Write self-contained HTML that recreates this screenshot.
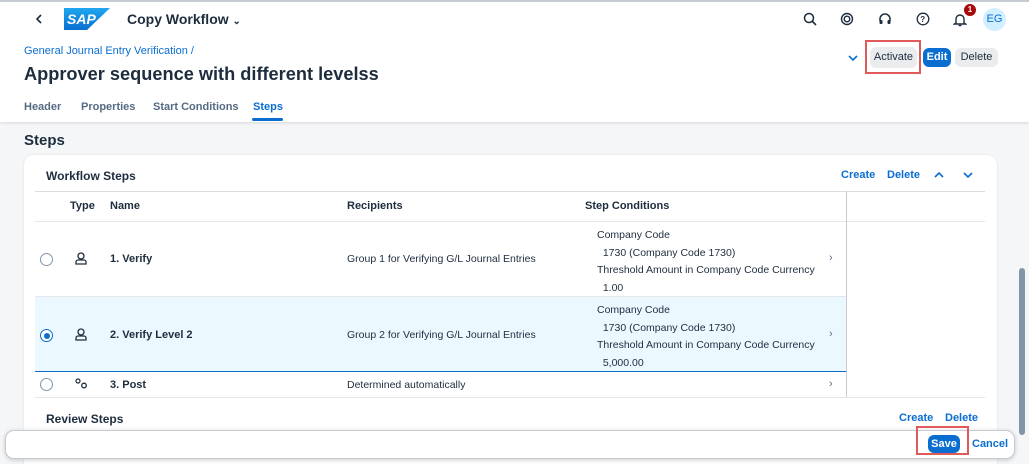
<!DOCTYPE html>
<html><head><meta charset="utf-8"><style>
*{box-sizing:border-box;margin:0;padding:0}
html,body{width:1029px;height:464px;overflow:hidden}
body{background:#f5f6f7;font-family:"Liberation Sans",sans-serif;color:#1d2d3e;position:relative}
.a{position:absolute;white-space:nowrap}
.b{font-weight:bold}
.blue{color:#0a6ed1}
.t12{font-size:11px}
</style></head><body>
<div class="a" style="left:0;top:0;width:1029px;height:122px;background:#fff;box-shadow:0 1px 3px rgba(0,0,0,.12)"></div>
<div class="a" style="left:0;top:0;width:1029px;height:2px;background:#c6ccd2"></div>
<svg class="a" style="left:34px;top:13px" width="10" height="12"><path d="M7 2L3 6l4 4" stroke="#1d2d3e" stroke-width="1.6" fill="none"/></svg>
<svg class="a" style="left:64px;top:8px" width="46" height="22"><defs><linearGradient id="g" x1="0" y1="0" x2="0" y2="1"><stop offset="0" stop-color="#1fa7ef"/><stop offset="1" stop-color="#0a6ed1"/></linearGradient></defs><path d="M0 0H46L23 22H0Z" fill="url(#g)"/><text x="3" y="16" font-family="Liberation Sans" font-weight="bold" font-size="14" fill="#fff" font-style="italic">SAP</text></svg>
<div class="a b" style="left:127px;top:11px;font-size:14px">Copy Workflow <span style="font-size:10px">⌄</span></div>
<svg class="a" style="left:803px;top:12px" width="14" height="14"><circle cx="6" cy="6" r="4.5" stroke="#1d2d3e" stroke-width="1.5" fill="none"/><path d="M9.5 9.5L13 13" stroke="#1d2d3e" stroke-width="1.6"/></svg>
<svg class="a" style="left:840px;top:12px" width="14" height="14"><circle cx="7" cy="7" r="5.5" stroke="#1d2d3e" stroke-width="1.4" fill="none"/><circle cx="7" cy="7" r="2.8" stroke="#1d2d3e" stroke-width="1.4" fill="none"/></svg>
<svg class="a" style="left:878px;top:12px" width="14" height="14"><path d="M2 9V7a5 5 0 0110 0v2" stroke="#1d2d3e" stroke-width="1.5" fill="none"/><rect x="1.5" y="8" width="3" height="4" rx="1" fill="#1d2d3e"/><rect x="9.5" y="8" width="3" height="4" rx="1" fill="#1d2d3e"/></svg>
<svg class="a" style="left:916px;top:12px" width="14" height="14"><circle cx="7" cy="7" r="5.8" stroke="#1d2d3e" stroke-width="1.3" fill="none"/><text x="4.3" y="10" font-size="8" font-weight="bold" fill="#1d2d3e" font-family="Liberation Sans">?</text></svg>
<svg class="a" style="left:953px;top:12px" width="14" height="15"><path d="M3 11V7a4 4 0 018 0v4l1.5 1H1.5z" stroke="#1d2d3e" stroke-width="1.4" fill="none"/><path d="M5.5 13.5h3" stroke="#1d2d3e" stroke-width="1.4"/></svg>
<div class="a" style="left:964px;top:4px;width:12px;height:12px;border-radius:6px;background:#aa0808;color:#fff;font-size:8px;text-align:center;line-height:12px;font-weight:bold">1</div>
<div class="a" style="left:983px;top:8px;width:23px;height:23px;border-radius:12px;background:#d1efff;color:#0a6ed1;font-size:11px;text-align:center;line-height:23px">EG</div>
<div class="a blue" style="left:24px;top:45px;font-size:11px">General Journal Entry Verification /</div>
<div class="a b" style="left:24px;top:64px;font-size:18.2px">Approver sequence with different levelss</div>
<div class="a b t12" style="left:24px;top:101px;color:#556b82">Header</div>
<div class="a b t12" style="left:81px;top:101px;color:#556b82">Properties</div>
<div class="a b t12" style="left:153px;top:101px;color:#556b82">Start Conditions</div>
<div class="a b t12 blue" style="left:253px;top:101px">Steps</div>
<div class="a" style="left:252px;top:118px;width:31px;height:3px;background:#0a6ed1;border-radius:2px"></div>
<svg class="a" style="left:848px;top:54px" width="10" height="8"><path d="M1 2l4 4 4-4" stroke="#0a6ed1" stroke-width="1.6" fill="none"/></svg>
<div class="a" style="left:870px;top:47px;width:47px;height:21px;background:#eaecee;border-radius:6px;font-size:11px;text-align:center;line-height:21px">Activate</div>
<div class="a" style="left:865px;top:40px;width:56px;height:34px;border:2px solid #e05a5a"></div>
<div class="a b" style="left:923px;top:48px;width:28px;height:19px;background:#0a6ed1;border-radius:6px;font-size:11px;color:#fff;text-align:center;line-height:19px">Edit</div>
<div class="a" style="left:955px;top:48px;width:43px;height:19px;background:#eaecee;border-radius:6px;font-size:11px;text-align:center;line-height:19px">Delete</div>
<div class="a b" style="left:24px;top:132px;font-size:15px">Steps</div>
<div class="a" style="left:24px;top:155px;width:973px;height:320px;background:#fff;border-radius:10px;box-shadow:0 0 2px rgba(0,0,0,.1)"></div>
<div class="a b t12" style="left:46px;top:169px;font-size:12px">Workflow Steps</div>
<div class="a b t12 blue" style="left:841px;top:169px">Create</div>
<div class="a b t12 blue" style="left:887px;top:169px">Delete</div>
<svg class="a" style="left:934px;top:171px" width="10" height="8"><path d="M1 6l4-4 4 4" stroke="#0a6ed1" stroke-width="1.6" fill="none"/></svg>
<svg class="a" style="left:963px;top:171px" width="10" height="8"><path d="M1 2l4 4 4-4" stroke="#0a6ed1" stroke-width="1.6" fill="none"/></svg>
<div class="a" style="left:35px;top:191px;width:950px;height:1px;background:#d9dde2"></div>
<div class="a b t12" style="left:70px;top:200px">Type</div>
<div class="a b t12" style="left:110px;top:200px">Name</div>
<div class="a b t12" style="left:347px;top:200px">Recipients</div>
<div class="a b t12" style="left:585px;top:200px">Step Conditions</div>
<div class="a" style="left:35px;top:221px;width:950px;height:1px;background:#e5e8eb"></div>
<div class="a" style="left:35px;top:296px;width:811px;height:76px;background:#ebf8ff;border-bottom:1px solid #0a6ed1;border-top:1px solid #e5e8eb"></div>
<div class="a" style="left:35px;top:397px;width:950px;height:1px;background:#e5e8eb"></div>
<div class="a" style="left:846px;top:191px;width:1px;height:206px;background:#c6ccd2"></div>
<div class="a" style="left:40px;top:253px;width:13px;height:13px;border-radius:7px;border:1px solid #8396a8;background:#fff"></div>
<div class="a" style="left:40px;top:329px;width:13px;height:13px;border-radius:7px;border:1px solid #0a6ed1;background:#fff"></div>
<div class="a" style="left:43.5px;top:332.5px;width:6px;height:6px;border-radius:3px;background:#0a6ed1"></div>
<div class="a" style="left:40px;top:378px;width:13px;height:13px;border-radius:7px;border:1px solid #8396a8;background:#fff"></div>
<svg class="a" style="left:75px;top:252px" width="12" height="13"><circle cx="6" cy="4" r="3" stroke="#1d2d3e" stroke-width="1.3" fill="none"/><path d="M1 12V10a2 2 0 012-2h6a2 2 0 012 2v2z" stroke="#1d2d3e" stroke-width="1.3" fill="none"/></svg>
<svg class="a" style="left:75px;top:328px" width="12" height="13"><circle cx="6" cy="4" r="3" stroke="#1d2d3e" stroke-width="1.3" fill="none"/><path d="M1 12V10a2 2 0 012-2h6a2 2 0 012 2v2z" stroke="#1d2d3e" stroke-width="1.3" fill="none"/></svg>
<svg class="a" style="left:75px;top:378px" width="13" height="11"><circle cx="3" cy="3" r="2" stroke="#1d2d3e" stroke-width="1.2" fill="none"/><circle cx="9" cy="7.5" r="2.3" stroke="#1d2d3e" stroke-width="1.3" fill="none"/></svg>
<div class="a b t12" style="left:110px;top:253px">1. Verify</div>
<div class="a b t12" style="left:110px;top:329px">2. Verify Level 2</div>
<div class="a b t12" style="left:110px;top:379px">3. Post</div>
<div class="a" style="left:347px;top:253px;font-size:10.5px">Group 1 for Verifying G/L Journal Entries</div>
<div class="a" style="left:347px;top:329px;font-size:10.5px">Group 2 for Verifying G/L Journal Entries</div>
<div class="a" style="left:347px;top:379px;font-size:10.5px">Determined automatically</div>
<div class="a" style="left:597px;top:227px;line-height:17.5px;font-size:10.5px">Company Code<br>&nbsp;&nbsp;1730 (Company Code 1730)<br>Threshold Amount in Company Code Currency<br>&nbsp;&nbsp;1.00</div>
<div class="a" style="left:597px;top:302px;line-height:17.5px;font-size:10.5px">Company Code<br>&nbsp;&nbsp;1730 (Company Code 1730)<br>Threshold Amount in Company Code Currency<br>&nbsp;&nbsp;5,000.00</div>
<div class="a" style="left:829px;top:252px;font-size:11px;color:#556b82">›</div>
<div class="a" style="left:829px;top:328px;font-size:11px;color:#556b82">›</div>
<div class="a" style="left:829px;top:378px;font-size:11px;color:#556b82">›</div>
<div class="a b" style="left:46px;top:412px;font-size:12px">Review Steps</div>
<div class="a b t12 blue" style="left:899px;top:412px">Create</div>
<div class="a b t12 blue" style="left:945px;top:412px">Delete</div>
<div class="a" style="left:1019px;top:268px;width:6px;height:167px;background:#8396a8;border-radius:3px"></div>
<div class="a" style="left:5px;top:430px;width:1010px;height:29px;background:#fff;border:1px solid #c6ccd2;border-radius:9px;box-shadow:0 1px 4px rgba(0,0,0,.2)"></div>
<div class="a b" style="left:928px;top:435px;width:32px;height:18px;background:#0a6ed1;border-radius:6px;font-size:11px;color:#fff;text-align:center;line-height:18px">Save</div>
<div class="a" style="left:916px;top:426px;width:53px;height:29px;border:2px solid #e05a5a"></div>
<div class="a b t12 blue" style="left:972px;top:438px">Cancel</div>
</body></html>
